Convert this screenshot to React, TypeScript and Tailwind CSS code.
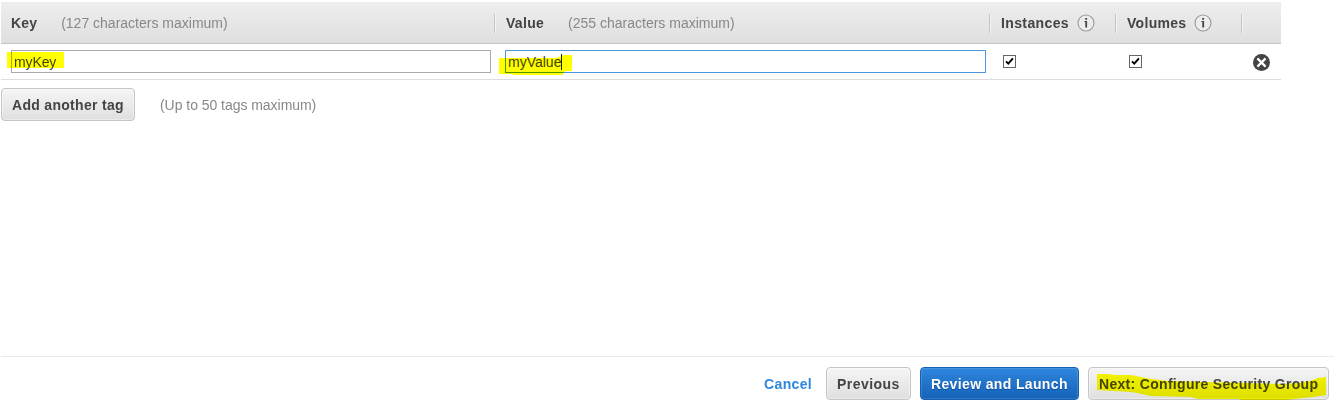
import { ReactNode } from 'react';

const FONT = "font-['Liberation_Sans',Arial,sans-serif]";

function Info({ className }: { className: string }) {
  return (
    <svg className={`h-[18px] w-[18px] shrink-0 ${className}`} viewBox="0 0 18 18">
      <circle cx="9" cy="9" r="8" fill="#ececec" stroke="#999999" strokeWidth="1.1" />
      <path d="M8.2 4h1.9v1.8H8.2z M7.4 7H10.1V13.6H8.3V8H7.4z" fill="#444444" />
    </svg>
  );
}

function Column({ title, hint, info, className }: { title: string; hint?: string; info?: string; className: string }) {
  return (
    <div className={`flex h-full shrink-0 items-center ${className}`}>
      <span className="text-[14px] leading-[20px] font-bold text-[#444444]">{title}</span>
      {hint && <span className="text-[14px] leading-[20px] tracking-normal text-[#888888]">{hint}</span>}
      {info && <Info className={info} />}
    </div>
  );
}

function Divider() {
  return <div className="mt-px h-[19px] w-[2px] shrink-0 border-l border-[#c4c4c4] bg-[#f4f4f4]" />;
}

function Check() {
  return (
    <button aria-label="Toggle" className="block h-[13px] w-[13px] shrink-0 border border-[#666666] bg-white">
      <svg className="h-[11px] w-[11px]" viewBox="0 0 11 11">
        <path d="M2 5.4 L4.3 7.6 L8.9 2.4" fill="none" stroke="#000000" strokeWidth="2" />
      </svg>
    </button>
  );
}

function Button({ children, className, primary }: { children: ReactNode; className: string; primary?: boolean }) {
  const look = primary
    ? 'border-[#1561b5] bg-gradient-to-b from-[#2e87dd] to-[#1462b8] text-white [text-shadow:0_1px_1px_#0d4c94] shadow-[inset_0_0_0_1px_#ffffff20]'
    : 'border-[#c5c5c5] bg-gradient-to-b from-[#f5f5f5] to-[#dfdfdf] text-[#444444] shadow-[inset_0_0_0_1px_#ffffff60]';
  return (
    <button
      className={`relative flex h-[33px] shrink-0 items-center rounded-[4px] border pl-[10px] text-[14px] leading-[20px] font-bold whitespace-nowrap ${look} ${className}`}
    >
      {children}
    </button>
  );
}

export default function App() {
  return (
    <div className={`flex h-[416px] w-[1337px] flex-col overflow-hidden bg-white pt-[2px] ${FONT}`}>
      <div className="ml-px flex h-[42px] w-[1280px] shrink-0 items-center border-b border-[#c4c4c4] bg-gradient-to-b from-[#eeeeee] to-[#dfdfdf]">
        <Column title="Key" hint="(127 characters maximum)" className="w-[493px] gap-[24px] pl-[10px] tracking-[0.16px]" />
        <Divider />
        <Column title="Value" hint="(255 characters maximum)" className="w-[493px] gap-[24px] pl-[10px] tracking-[0.3px]" />
        <Divider />
        <Column title="Instances" info="ml-[8px]" className="w-[124px] pl-[10px] tracking-[0.38px]" />
        <Divider />
        <Column title="Volumes" info="ml-[8px]" className="w-[124px] pl-[10px] tracking-[0.3px]" />
        <Divider />
      </div>

      <div className="ml-px flex h-[36px] w-[1280px] shrink-0 border-b border-[#dddddd] pt-[6px] pl-[10px]">
        <div className="relative flex h-[23px] w-[480px] shrink-0 items-center border border-[#a9a9b0] bg-white pl-[2px] text-[14px] leading-[20px] tracking-[-0.12px] text-[#444444]">
          myKey
          <svg className="absolute top-[1px] left-[-5px] h-[16px] w-[57px] mix-blend-multiply" viewBox="0 0 57 16">
            <path d="M0 0H57V16H0z" fill="#ffff00" />
          </svg>
        </div>
        <div className="relative ml-[14px] flex h-[23px] w-[481px] shrink-0 items-center border border-[#4d95dc] bg-white pl-[2px] text-[14px] leading-[20px] text-[#444444]">
          myValue
          <span className="h-[16px] w-px bg-[#222222]" />
          <svg className="absolute top-[4px] left-[-7px] h-[20px] w-[73px] mix-blend-multiply" viewBox="0 0 73 20">
            <path d="M0 3H57L60 2L64 0H73V16H67L64 18V20H14V19H0z" fill="#ffff00" />
          </svg>
        </div>
        <div className="ml-[17px] flex w-[126px] shrink-0 pt-[5px]">
          <Check />
        </div>
        <div className="flex w-[124px] shrink-0 pt-[5px]">
          <Check />
        </div>
        <svg className="mt-[4px] h-[17px] w-[17px] shrink-0" viewBox="0 0 17 17">
          <circle cx="8.5" cy="8.5" r="8.5" fill="#444444" />
          <path d="M4.4 4.4L12.6 12.6M12.6 4.4L4.4 12.6" stroke="#ffffff" strokeWidth="2.2" />
        </svg>
      </div>

      <div className="mt-[8px] ml-px flex shrink-0 items-center">
        <Button className="w-[134px] tracking-[0.3px]">Add another tag</Button>
        <span className="ml-[25px] text-[14px] leading-[20px] tracking-[-0.04px] text-[#888888]">(Up to 50 tags maximum)</span>
      </div>

      <div className="mt-[235px] ml-px flex h-[60px] w-[1333px] shrink-0 items-start justify-end border-t border-[#eaeaea] pt-[10px] pr-[5px]">
        <a className="mt-[7px] mr-[14px] text-[14px] leading-[20px] font-bold tracking-[0.33px] text-[#2e86de]">Cancel</a>
        <Button className="mr-[9px] w-[85px] tracking-[0.45px]">Previous</Button>
        <Button primary className="mr-[9px] w-[159px] tracking-[0.36px]">
          Review and Launch
        </Button>
        <Button className="w-[241px] tracking-[0.31px]">
          Next: Configure Security Group
          <svg className="absolute top-[6px] left-[8px] h-[26px] w-[230px] mix-blend-multiply" viewBox="0 0 230 26">
            <path
              d="M0 0H10L18 1H34L44 3L54 5L72 7L110 8L150 9L185 10L202 9L213 7L221 4L229 3V21L216 23L206 24L190 26H143V25H101L94 23L54 22L45 20L34 18L0 16z"
              fill="#ffff00"
            />
          </svg>
        </Button>
      </div>
    </div>
  );
}
